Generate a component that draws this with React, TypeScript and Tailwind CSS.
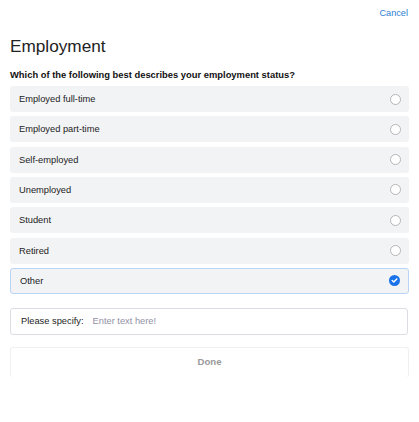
import React from "react";

const options = [
  "Employed full-time",
  "Employed part-time",
  "Self-employed",
  "Unemployed",
  "Student",
  "Retired",
  "Other",
];

function Radio({ checked }: { checked: boolean }) {
  if (checked) {
    return (
      <svg width="11" height="11" viewBox="0 0 11 11">
        <circle cx="5.5" cy="5.5" r="5.5" fill="#1a73e8" />
        <path d="M3.2 5.6 L4.8 7.1 L7.8 4" stroke="#fff" strokeWidth="1.4" fill="none" strokeLinecap="round" strokeLinejoin="round" />
      </svg>
    );
  }
  return <div className="w-[11px] h-[11px] rounded-full border border-[#b5b5b8] bg-white" />;
}

export default function App() {
  const selected = "Other";
  return (
    <div className="w-[419px] h-[422px] bg-white px-[10px] font-['Liberation_Sans',Arial,sans-serif] text-[#222]">
      {/* Header */}
      <div className="h-[28px] flex items-center justify-end pr-[1px]">
        <span className="text-[9.2px] text-[#2f7fd3]">Cancel</span>
      </div>

      <h1 className="mt-[7px] text-[17.2px] leading-[22px] text-[#222]">Employment</h1>

      <p className="mt-[12px] text-[9.4px] leading-[12px] font-bold text-[#111]">
        Which of the following best describes your employment status?
      </p>

      {/* Options */}
      <div className="mt-[5px] flex flex-col gap-[4.33px]">
        {options.map((o) => {
          const on = o === selected;
          return (
            <div
              key={o}
              className={
                on
                  ? "h-[26px] flex items-center justify-between pl-[9px] pr-[8px] rounded-[3px] bg-[#f2f3f5] border border-[#b9d4f6]"
                  : "h-[26px] flex items-center justify-between pl-[9px] pr-[8px] rounded-[3px] bg-[#f2f3f5]"
              }
            >
              <span className="text-[9.3px] leading-[12px] text-[#1c1c1c]">{o}</span>
              <Radio checked={on} />
            </div>
          );
        })}
      </div>

      {/* Specify */}
      <div className="mt-[14px] mr-[1px] h-[27px] flex items-center gap-[9px] pl-[10px] pr-[10px] rounded-[3px] border border-[#dcdce3] bg-white">
        <span className="text-[9.3px] text-[#1c1c1c]">Please specify:</span>
        <span className="text-[9.3px] text-[#9191a6]">Enter text here!</span>
      </div>

      {/* Done */}
      <div className="mt-[12px] h-[30px] flex items-center justify-center rounded-[3px] border border-[#f0f0f2] border-b-0 bg-white">
        <span className="text-[9.6px] font-bold text-[#9a9a9a]">Done</span>
      </div>
    </div>
  );
}
